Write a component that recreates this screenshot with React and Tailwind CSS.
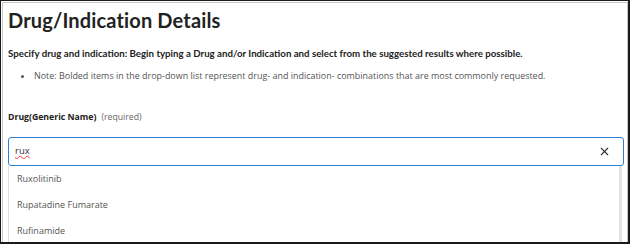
import React, { useState } from "react";
import { X } from "lucide-react";

const suggestions = ["Ruxolitinib", "Rupatadine Fumarate", "Rufinamide"];

const App = () => {
  const [query, setQuery] = useState("rux");

  return (
    <div className="w-[630px] h-[244px] overflow-hidden bg-white border border-[#1a1a1a] border-b-2 border-r-2 pl-px pt-px">
      <div className="h-full bg-white border border-[#c8c8c8] border-b-0 pl-[5px] pr-[3px] pt-[4px]">
        {/* Header */}
        <h1 className="text-[20px] leading-[26px] font-bold text-[#222] font-['Lato',sans-serif] tracking-[0.15px]">
          Drug/Indication Details
        </h1>

        <p className="mt-[13px] text-[9.7px] leading-[14px] font-bold text-[#222] font-['Lato',sans-serif] whitespace-nowrap">
          Specify drug and indication: Begin typing a Drug and/or Indication and select from the suggested
          results where possible.
        </p>

        <ul className="mt-[9px] ml-[26px] list-disc text-[8.95px] leading-[14px] text-[#555] font-['Open_Sans',sans-serif] whitespace-nowrap">
          <li>
            Note: Bolded items in the drop-down list represent drug- and indication- combinations that are
            most commonly requested.
          </li>
        </ul>

        {/* Drug field */}
        <div className="mt-[27px] text-[8.7px] leading-[14px] font-['Open_Sans',sans-serif]">
          <span className="font-bold text-[#222]">Drug(Generic Name)</span>
          <span className="ml-[5px] text-[#666]">(required)</span>
        </div>

        <div className="mt-[13px] relative">
          <div className="flex items-center h-[29px] border border-[#2f7fd6] rounded-[3px] pl-[6px] pr-[12px]">
            <input
              value={query}
              onChange={(e) => setQuery(e.target.value)}
              className="flex-1 outline-none text-[9.5px] text-[#333] font-['Open_Sans',sans-serif] underline decoration-wavy decoration-red-500 underline-offset-[1px]"
            />
            <X size={13} strokeWidth={2} className="text-[#333]" />
          </div>

          <div className="border-l border-r-[3px] border-l-[#ddd] border-r-[#e4e4e4] mr-[2px]">
            {suggestions.map((s) => (
              <div
                key={s}
                className="h-[26px] flex items-center pl-[8px] text-[9px] text-[#555] font-['Open_Sans',sans-serif]">
                {s}
              </div>
            ))}
          </div>
        </div>
      </div>
    </div>
  );
};

export default App;
